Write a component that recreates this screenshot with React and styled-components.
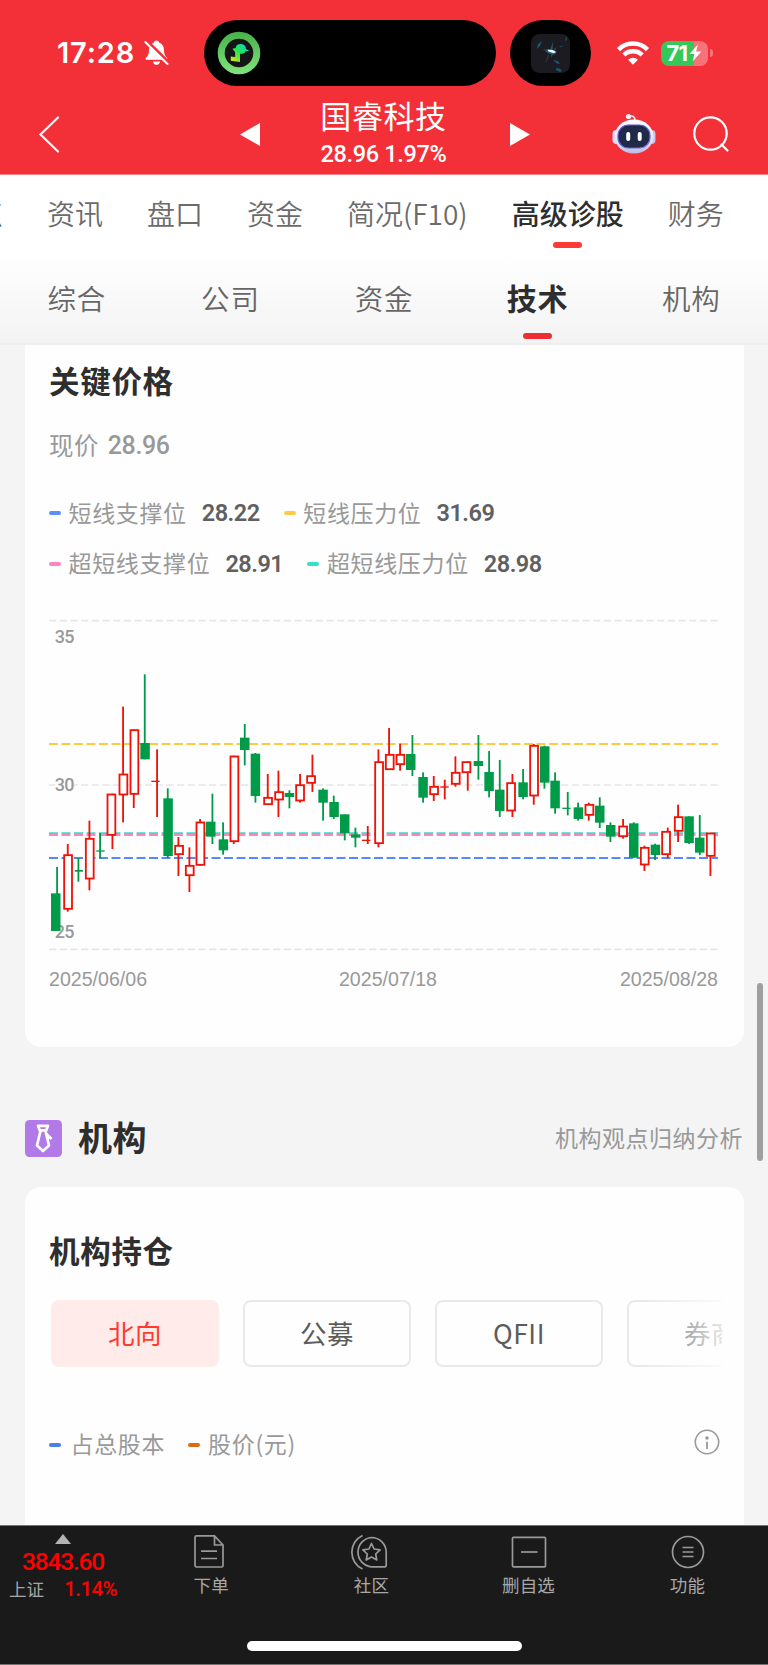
import React from 'react';
import styled, { createGlobalStyle } from 'styled-components';

const cjk = `"Noto Sans CJK SC", sans-serif`;
const din = `Roboto, "Noto Sans CJK SC", sans-serif`;

const GlobalStyle = createGlobalStyle`
  * { box-sizing: border-box; }
  body { margin: 0; background: #f4f4f4; font-family: ${cjk}; }
  svg { display: block; flex: none; }
`;

const Screen = styled.div`
  width: 768px;
  height: 1665px;
  position: relative;
  overflow: hidden;
  display: flex;
  flex-direction: column;
  background: #f4f4f4;
`;

/* ---------- header ---------- */
const Header = styled.header`
  height: 175px;
  flex: none;
  background: #f33038;
  border-bottom: 1px solid #f98388;
  color: #fff;
`;
const StatusBar = styled.div`
  height: 98px;
  padding: 8px 50px 0 57px;
  display: flex;
  align-items: center;
`;
const Clock = styled.div`
  width: 87px;
  flex: none;
  font: 600 29px/40px Inter, sans-serif;
  letter-spacing: 0.85px;
  white-space: nowrap;
`;
const Island = styled.div`
  width: ${p => p.$w}px;
  height: 66px;
  margin-left: ${p => p.$ml}px;
  flex: none;
  border-radius: 33px;
  background: #000;
  display: flex;
  align-items: center;
  padding-left: ${p => p.$pl}px;
`;
const WifiSlot = styled.div`margin-left: 25px;`;
const Battery = styled.div`
  width: 47px;
  height: 25px;
  margin-left: 11px;
  flex: none;
  border-radius: 8px;
  background: linear-gradient(90deg, #34c759 33px, #f87379 33px);
  display: flex;
  align-items: center;
  padding-left: 5.5px;
  font: 700 22px/25px Inter, sans-serif;
  letter-spacing: -0.8px;
`;
const BatteryCap = styled.div`
  width: 3px;
  height: 8px;
  margin-left: 2px;
  border-radius: 0 4px 4px 0;
  background: #f87379;
`;

const NavBar = styled.div`
  height: 76px;
  padding: 0 38px 4px 38px;
  display: flex;
  align-items: center;
  justify-content: space-between;
`;
const NavSide = styled.div`
  width: 122px;
  padding-left: ${p => p.$pl || 0}px;
  display: flex;
  align-items: center;
  justify-content: space-between;
`;
const StockSwitch = styled.div`
  width: 292px;
  padding-left: 2px;
  display: flex;
  align-items: center;
  justify-content: space-between;
`;
const StockTitle = styled.div`
  height: 76px;
  margin: 2px 3px 0 0;
  text-align: center;
  white-space: nowrap;
`;
const StockName = styled.div`
  font-size: 31px;
  line-height: 35px;
  letter-spacing: 0.6px;
`;
const StockQuote = styled.div`
  font: 500 23.5px/44px ${din};
  letter-spacing: -0.35px;
`;

/* ---------- tabs ---------- */
const MainTabs = styled.nav`
  height: 78px;
  flex: none;
  padding-left: 47px;
  display: flex;
  gap: 44px;
  background: #fff;
  overflow: hidden;
`;
const MainTab = styled.div`
  height: 78px;
  flex: none;
  display: flex;
  flex-direction: column;
  align-items: center;
  padding-top: 18px;
  font-size: 28px;
  line-height: 41px;
  white-space: nowrap;
  color: ${p => (p.$on ? '#2e2e2e' : '#6b6b6b')};
  font-weight: ${p => (p.$on ? 500 : 350)};
  &:first-child { margin-left: -100px; }
`;
const TabMark = styled.i`
  width: 29px;
  height: 6px;
  margin-top: ${p => p.$mt}px;
  border-radius: 3px;
  background: ${p => p.$c};
`;
const SubTabs = styled.nav`
  height: 92px;
  flex: none;
  display: grid;
  grid-template-columns: repeat(5, 1fr);
  background: linear-gradient(#fff, #f3f3f3);
  border-bottom: 2px solid #eee;
`;
const SubTab = styled.div`
  display: flex;
  flex-direction: column;
  align-items: center;
  padding-top: 24px;
  font-size: ${p => (p.$on ? 30 : 28.5)}px;
  font-weight: ${p => (p.$on ? 700 : 350)};
  line-height: 41px;
  letter-spacing: 0.8px;
  color: ${p => (p.$on ? '#2e2e2e' : '#666')};
`;

/* ---------- cards ---------- */
const Card = styled.section`
  width: 719px;
  height: ${p => p.$h}px;
  flex: none;
  margin-left: 25px;
  padding: ${p => p.$pt}px 25px 0 24px;
  background: #fefefe;
  border-radius: ${p => p.$radius};
  overflow: hidden;
`;
const CardTitle = styled.h2`
  margin: 0;
  font-size: 30.5px;
  line-height: 44px;
  font-weight: 700;
  letter-spacing: 0.7px;
  color: #2e2e2e;
`;
const PriceLine = styled.div`
  margin-top: 22px;
  display: flex;
  align-items: center;
  gap: 9px;
  height: 40px;
  font-size: 24.5px;
  letter-spacing: 0.4px;
  color: #999;
`;
const PriceValue = styled.span`
  margin-top: 4px;
  font: 500 25px/40px ${din};
  letter-spacing: -0.4px;
`;
const Legends = styled.div`
  margin-top: ${p => p.$mt}px;
  display: flex;
  flex-direction: column;
`;
const LegendRow = styled.div`
  height: 50.5px;
  display: flex;
  align-items: center;
  gap: 25px;
`;
const LegendItem = styled.div`
  display: flex;
  align-items: center;
  font-size: 23px;
  color: #999;
  white-space: nowrap;
`;
const LegendLabel = styled.span`
  margin-top: -3px;
  letter-spacing: 0.65px;
`;
const Dash = styled.i`
  width: 12px;
  height: 4px;
  margin-right: ${p => p.$gap || 7}px;
  border-radius: 2px;
  background: ${p => p.$c};
`;
const LegendValue = styled.b`
  width: 57px;
  margin-left: 15px;
  font: 600 23.5px/34px ${din};
  letter-spacing: -0.5px;
  color: #606060;
`;
const ChartSvg = styled.svg`
  margin-top: 21px;
`;
const Dates = styled.div`
  width: 669px;
  margin-top: 12px;
  display: flex;
  justify-content: space-between;
  font: 19.6px/24px "Liberation Sans", sans-serif;
  color: #999;
  span:nth-child(2) { margin-left: 9px; }
`;

const SectionHead = styled.div`
  height: 140px;
  flex: none;
  padding: 40px 25px 0 24.5px;
  display: flex;
  align-items: center;
  svg { margin-top: 2px; }
`;
const SectionTitle = styled.h1`
  margin: 0 auto 0 16.5px;
  font-size: 34px;
  line-height: 50px;
  font-weight: 700;
  letter-spacing: 0.6px;
  color: #2e2e2e;
`;
const SectionNote = styled.span`
  margin-top: -1px;
  font-size: 23px;
  letter-spacing: 0.5px;
  color: #999;
`;
const Pills = styled.div`
  width: 673px;
  margin-top: 28px;
  padding-left: 2px;
  display: flex;
  gap: 24px;
  overflow: hidden;
  position: relative;
  &::after {
    content: '';
    position: absolute;
    inset: 0 0 0 auto;
    width: 80px;
    background: linear-gradient(90deg, rgba(254, 254, 254, 0), rgba(254, 254, 254, 0.85));
  }
`;
const Pill = styled.div`
  width: 168px;
  height: 67px;
  flex: none;
  display: flex;
  align-items: center;
  justify-content: center;
  border-radius: 8px;
  border: 2px solid ${p => (p.$on ? '#ffebea' : '#e9e9e9')};
  background: ${p => (p.$on ? '#ffebea' : '#fefefe')};
  color: ${p => (p.$on ? '#ff3b30' : '#5c5c5c')};
  font-size: 26.5px;
  letter-spacing: 0.5px;
  padding-bottom: 2px;
`;
const HoldingLegend = styled.div`
  margin-top: 62px;
  display: flex;
  align-items: center;
  gap: 23px;
`;
const InfoSlot = styled.div`
  margin: -6px -1px 0 auto;
`;

const ScrollThumb = styled.div`
  position: absolute;
  left: 757px;
  top: 983px;
  width: 6px;
  height: 178px;
  border-radius: 3px;
  background: #9f9f9f;
`;

/* ---------- bottom bar ---------- */
const BottomBar = styled.footer`
  height: 140px;
  flex: none;
  background: #1a1a1a;
  border-top: 1px solid #737373;
  border-bottom: 1px solid #737373;
  display: flex;
  flex-direction: column;
  align-items: center;
  justify-content: space-between;
`;
const BottomItems = styled.div`
  width: 768px;
  display: flex;
`;
const IndexBox = styled.div`
  width: 131px;
  padding-top: 8px;
  display: flex;
  flex-direction: column;
  align-items: center;
  padding-right: 5px;
`;
const IndexValue = styled.div`
  font: 500 24.5px/35px ${din};
  letter-spacing: -1.2px;
  color: #f00;
`;
const IndexChange = styled.div`
  width: 108px;
  display: flex;
  justify-content: space-between;
  align-items: center;
  font-size: 17.5px;
  line-height: 20px;
  color: #a6a6a6;
`;
const Percent = styled.span`
  font: 500 20.5px/20px ${din};
  letter-spacing: -0.6px;
  color: #f00;
`;
const Action = styled.div`
  width: 159px;
  padding-top: 8px;
  padding-left: ${p => p.$pl || 0}px;
  display: flex;
  flex-direction: column;
  align-items: center;
  font-size: 17.5px;
  line-height: 26px;
  letter-spacing: 0.2px;
  color: #a8a8a8;
  svg { margin-right: ${p => p.$shift || 0}px; margin-bottom: 2px; }
`;
const HomeIndicator = styled.div`
  width: 275px;
  height: 10px;
  margin-bottom: 13px;
  border-radius: 5px;
  background: #fff;
`;

/* ---------- candlestick chart ---------- */
// [color, body left, body top, body bottom, wick x, wick top, wick bottom], three units per pixel
const candles = [
  ['g', 6, 850, 963, 24, 771, 963], ['r', 43, 733, 899, 56, 702, 905],
  ['g', 77, 780, 785, 88, 744, 815], ['r', 108, 684, 808, 121, 632, 841],
  ['g', 142, 721, 725, 153, 669, 745], ['r', 173, 551, 677, 190, 551, 717],
  ['r', 209, 491, 556, 222, 290, 637], ['r', 242, 358, 554, 254, 358, 594],
  ['g', 274, 399, 448, 287, 193, 448], ['r', 307, 512, 516, 324, 418, 621],
  ['g', 343, 565, 738, 356, 535, 744], ['r', 376, 705, 735, 388, 681, 798],
  ['r', 408, 765, 798, 421, 712, 846], ['r', 440, 635, 767, 453, 627, 767],
  ['g', 471, 635, 680, 490, 551, 702], ['g', 509, 688, 721, 522, 637, 734],
  ['r', 542, 437, 696, 554, 437, 702], ['g', 573, 383, 420, 587, 342, 466],
  ['g', 605, 431, 558, 619, 429, 578], ['r', 643, 561, 585, 656, 492, 585],
  ['r', 676, 544, 571, 688, 482, 621], ['g', 707, 549, 561, 721, 541, 595],
  ['r', 739, 523, 574, 753, 492, 578], ['r', 772, 496, 521, 790, 434, 546],
  ['g', 808, 539, 578, 822, 535, 632], ['g', 841, 576, 621, 854, 557, 627],
  ['g', 873, 613, 670, 887, 613, 691], ['g', 906, 673, 683, 919, 653, 712],
  ['r', 939, 689, 693, 956, 648, 702], ['r', 976, 454, 702, 988, 418, 712],
  ['r', 1008, 432, 480, 1020, 354, 480], ['r', 1040, 432, 465, 1053, 401, 482],
  ['g', 1071, 432, 480, 1090, 375, 498], ['g', 1108, 501, 563, 1122, 487, 578],
  ['r', 1141, 528, 555, 1154, 498, 573], ['r', 1174, 529, 533, 1187, 509, 568],
  ['r', 1206, 486, 524, 1219, 439, 530], ['r', 1238, 454, 489, 1256, 454, 542],
  ['g', 1274, 453, 468, 1288, 375, 509], ['g', 1306, 486, 543, 1320, 423, 562],
  ['g', 1338, 539, 603, 1352, 450, 621], ['r', 1372, 517, 604, 1390, 492, 621],
  ['g', 1408, 517, 561, 1422, 477, 568], ['r', 1441, 405, 559, 1454, 402, 584],
  ['g', 1473, 409, 518, 1486, 407, 536], ['g', 1504, 512, 595, 1518, 487, 611],
  ['g', 1540, 593, 597, 1556, 546, 616], ['g', 1574, 592, 627, 1587, 578, 632],
  ['r', 1607, 582, 617, 1619, 578, 632], ['g', 1638, 587, 638, 1652, 562, 654],
  ['g', 1671, 645, 680, 1684, 637, 696], ['r', 1708, 647, 681, 1722, 627, 686],
  ['g', 1740, 640, 743, 1754, 637, 743], ['r', 1773, 711, 766, 1786, 707, 783],
  ['g', 1805, 704, 735, 1818, 701, 750], ['r', 1837, 663, 735, 1856, 653, 745],
  ['r', 1875, 619, 665, 1887, 584, 696], ['g', 1906, 619, 699, 1920, 619, 702],
  ['g', 1938, 683, 728, 1952, 615, 735], ['r', 1971, 668, 740, 1984, 668, 798],
];
const levels = [
  { y: 402, c: '#ffc940' },
  { y: 675, c: '#f589c5' },
  { y: 669.5, c: '#3fd9c8' },
  { y: 744, c: '#5588ff' },
];

function Candle({ d }) {
  const [kind, x, top, bottom, wx, wt, wb] = d;
  const up = kind === 'r';
  const color = up ? '#ef1208' : '#009b48';
  const thin = bottom - top < 8;
  return (
    <g>
      <rect x={wx - 2.5} y={wt} width="5.5" height={wb - wt} fill={color} />
      {up && !thin ? (
        <rect x={x + 2.5} y={top + 2.5} width="23.5" height={bottom - top - 5} fill="#fefefe" stroke={color} strokeWidth="5.5" />
      ) : (
        <rect x={x} y={top} width={thin ? 25 : 28.5} height={bottom - top} fill={color} />
      )}
    </g>
  );
}

function KeyPriceChart() {
  return (
    <ChartSvg width="670" height="345" viewBox="0 0 2010 1035">
      {[32, 525, 1018].map(y => (
        <line key={y} x1="0" x2="2007" y1={y} y2={y} stroke="#e6e6e6" strokeWidth="5" strokeDasharray="22 10" />
      ))}
      <rect x="18" y="500" width="57" height="50" fill="#fefefe" />
      <g fill="#999" fontFamily="Roboto, sans-serif" fontSize="54" fontWeight="500" letterSpacing="-2">
        <text x="17" y="98">35</text>
        <text x="17" y="542">30</text>
        <text x="17" y="985">25</text>
      </g>
      {levels.map(l => (
        <line key={l.y} x1="0" x2="2007" y1={l.y} y2={l.y} stroke={l.c} strokeWidth="5.5" strokeDasharray="27 10.5" />
      ))}
      {candles.map((d, i) => <Candle key={i} d={d} />)}
    </ChartSvg>
  );
}

/* ---------- icons ---------- */
const BellOff = () => (
  <svg width="26" height="28" viewBox="0 0 26 28">
    <path d="M12.5 1.5c1.6 0 2.6 1 2.8 2.2 3.200 1 4.600 3.800 4.700 7.300 0 4.300 1.300 6 3 7.700.8.9.4 2.100-.8 2.100H2.800c-1.200 0-1.600-1.200-.8-2.100 1.700-1.700 3-3.400 3-7.700.1-3.500 1.500-6.300 4.700-7.300.2-1.200 1.200-2.200 2.800-2.200z" fill="#fff" />
    <path d="M9 22.600h7c-.3 2.200-1.700 3.400-3.500 3.400S9.300 24.800 9 22.600z" fill="#fff" />
    <path d="M2.600 1.500 26 24.500" stroke="#f33038" strokeWidth="3" />
    <path d="M1.300 3 23.500 25" stroke="#fff" strokeWidth="2" strokeLinecap="round" />
  </svg>
);
const GreenRing = () => (
  <svg width="44" height="44" viewBox="0 0 44 44">
    <defs>
      <linearGradient id="ring" x1="0" y1="0" x2="0" y2="1"><stop offset="0" stopColor="#48b04a" /><stop offset="1" stopColor="#80e57c" /></linearGradient>
      <linearGradient id="mark" x1="1" y1="0" x2="0" y2="1"><stop offset="0.1" stopColor="#10d5c0" /><stop offset="0.5" stopColor="#25e554" /><stop offset="1" stopColor="#fbe30b" /></linearGradient>
    </defs>
    <circle cx="22" cy="22" r="21.300" fill="url(#ring)" />
    <circle cx="22" cy="22" r="14.300" fill="#151515" />
    <path d="M18.700 17c.2-2.500 2.100-4 4.900-4 3.200 0 5.200 1.800 5.400 5l3.200 1.800-3.700.6c-.5 1.500-2.500 2.400-5.500 2.300v8.400l-9.200-1.400v-4.200l4.400.6V21.200l-2.800-3.400z" fill="url(#mark)" />
  </svg>
);
const NowPlaying = () => (
  <svg width="39" height="39" viewBox="0 0 39 39">
    <rect width="39" height="39" rx="8.500" fill="#1b1b21" />
    <g fill="#17647f" opacity="0.85">
      <path d="M7 10l4-3-2 5-3 3zM25 34l3 1-1-2 4 4-2 1-4-2zM28 12.500l5-1-4 2zM.5 20l1 4zM35 2l1 3-2 3z" />
      <path d="M22 26l5 1 2 3-3-.5z" />
    </g>
    <path d="M12 15.500c3 0 5 .3 7 1l3-9-.5 9.500 4-4-2.500 5.500 3 1.500-4 .5-2 3 .3-3.500c-3 0-5-1.500-6-3.500z" fill="#25596a" />
    <path d="M17.500 21l-2.500 7" stroke="#3a454d" strokeWidth="0.800" />
    <path d="M16.500 15.500l5 .5 4 2-3 1.200-5-1.700z" fill="#e4faff" />
  </svg>
);
const Wifi = () => (
  <svg width="34" height="26" viewBox="0 0 34 26" fill="none" stroke="#fff" strokeWidth="4.500">
    <path d="M2.500 9.600a20.500 20.500 0 0 1 29 0" />
    <path d="M7.800 15a13 13 0 0 1 18.400 0" />
    <path d="M17 24.700l-4.900-5a7 7 0 0 1 9.800 0z" fill="#fff" stroke="none" />
  </svg>
);
const BoltSvg = styled.svg`margin-left: 1.5px;`;
const Bolt = () => (
  <BoltSvg width="13" height="18" viewBox="0 0 13 18">
    <path d="M8.800.5.500 10h4.900L3.700 17.500 12.300 7.500H7.200z" fill="#fff" />
  </BoltSvg>
);
const Back = () => (
  <svg width="22" height="38" viewBox="0 0 22 38"><path d="M20 2.500 2.500 19.500 20 36.500" fill="none" stroke="#fff" strokeWidth="2.200" strokeLinecap="round" /></svg>
);
const Tri = ({ flip }) => (
  <svg width="20" height="23" viewBox="0 0 20 23"><path d={flip ? 'M20 11.500 0 0v23z' : 'M0 11.500 20 0v23z'} fill="#fff" /></svg>
);
const Robot = () => (
  <svg width="44" height="42" viewBox="0 0 44 42">
    <defs>
      <linearGradient id="head" x1="0" y1="0" x2="0" y2="1"><stop offset="0" stopColor="#fff" /><stop offset="0.65" stopColor="#e3e1f7" /><stop offset="1" stopColor="#bfb9e6" /></linearGradient>
      <linearGradient id="rim" x1="0" y1="0" x2="1" y2="1"><stop offset="0" stopColor="#7c4ce0" /><stop offset="0.6" stopColor="#4168c8" /><stop offset="1" stopColor="#a56be8" /></linearGradient>
    </defs>
    <path d="M17 3.500c4-1.300 6 .5 6 4" fill="none" stroke="#eeecfa" strokeWidth="1.600" />
    <circle cx="16.500" cy="3.500" r="2.600" fill="#f2f1fb" />
    <rect x="0.500" y="17" width="8" height="14" rx="4" fill="#dcdaf3" />
    <rect x="35.500" y="17" width="8" height="14" rx="4" fill="#c9c5ec" />
    <ellipse cx="22" cy="23.500" rx="19.500" ry="17" fill="url(#head)" />
    <rect x="6" y="12" width="32" height="23" rx="10.500" fill="#202948" stroke="url(#rim)" strokeWidth="1.200" />
    <rect x="14.200" y="19" width="4" height="9" rx="2" fill="#fff" />
    <rect x="25.700" y="19" width="4" height="9" rx="2" fill="#fff" />
  </svg>
);
const Search = () => (
  <svg width="38" height="38" viewBox="0 0 38 38" fill="none" stroke="#fff" strokeWidth="2.200" strokeLinecap="round">
    <circle cx="18.500" cy="18.500" r="16.200" /><path d="M29.500 29.500 35.500 35.500" />
  </svg>
);
const Tie = () => (
  <svg width="37" height="37" viewBox="0 0 37 37">
    <rect width="37" height="37" rx="4.500" fill="#b17ae8" />
    <g fill="none" stroke="#fff" strokeWidth="2.700" strokeLinejoin="round">
      <path d="M13 5.800h10l-1.700 4.500h-6.600zM15.600 10.500l-3.600 15 6 5.500 6-5.500-3.600-15zM20.500 13l6 6" />
    </g>
  </svg>
);
const Info = () => (
  <svg width="26" height="26" viewBox="0 0 26 26">
    <circle cx="13" cy="13" r="11.700" fill="none" stroke="#999" strokeWidth="1.600" />
    <circle cx="13" cy="9" r="1.800" fill="#999" /><path d="M13 12.800V20" stroke="#999" strokeWidth="1.800" />
  </svg>
);
const lineIcon = { width: 38, height: 36, viewBox: '0 0 38 36', fill: 'none', stroke: '#999', strokeWidth: 1.7 };
const DocIcon = () => (
  <svg {...lineIcon}><path d="M24.500 1.800H6.500Q5 1.800 5 3.300V31.500Q5 33 6.500 33H31.500Q33 33 33 31.500V11zM24.500 1.800V11H33M11 17.200H27M11 24.500H27" /></svg>
);
const CommunityIcon = () => (
  <svg {...lineIcon}>
    <path d="M12.500 1.500A18.500 18.500 0 0 0 12.500 35M21.500 3.500A14.700 14.700 0 0 0 21.500 32.800H34.500Q36.200 32.800 36.200 31V18.200A14.700 14.700 0 0 0 21.500 3.500z" />
    <path d="M21.500 9.500l2.600 5.500 6 .8-4.400 4.200 1.100 6-5.300-2.900-5.300 2.900 1.100-6-4.400-4.200 6-.8z" strokeLinejoin="round" />
  </svg>
);
const RemoveIcon = () => (
  <svg {...lineIcon}><rect x="2.500" y="3.300" width="33" height="29.500" rx="1" /><path d="M11 18H27.500" /></svg>
);
const MenuIcon = () => (
  <svg {...lineIcon}><circle cx="19" cy="18" r="15.500" /><path d="M13.500 13.500H24.500M13.500 18H24.500M13.500 22.500H24.500" /></svg>
);

const mainTabs = ['看点', '资讯', '盘口', '资金', '简况(F10)', '高级诊股', '财务'];
const subTabs = ['综合', '公司', '资金', '技术', '机构'];
const legendRows = [
  [['#5b8ff9', '短线支撑位', '28.22'], ['#ffcb47', '短线压力位', '31.69']],
  [['#f986c3', '超短线支撑位', '28.91'], ['#35dfc9', '超短线压力位', '28.98']],
];

export default function App() {
  return (
    <>
      <GlobalStyle />
      <Screen>
        <Header>
          <StatusBar>
            <Clock>17:28</Clock>
            <BellOff />
            <Island $w={292} $ml={34} $pl={12.5}><GreenRing /></Island>
            <Island $w={81} $ml={14} $pl={21}><NowPlaying /></Island>
            <WifiSlot><Wifi /></WifiSlot>
            <Battery>71<Bolt /></Battery>
            <BatteryCap />
          </StatusBar>
          <NavBar>
            <NavSide><Back /></NavSide>
            <StockSwitch>
              <Tri />
              <StockTitle>
                <StockName>国睿科技</StockName>
                <StockQuote>28.96 1.97%</StockQuote>
              </StockTitle>
              <Tri flip />
            </StockSwitch>
            <NavSide $pl={4}><Robot /><Search /></NavSide>
          </NavBar>
        </Header>

        <MainTabs>
          {mainTabs.map(t => (
            <MainTab key={t} $on={t === '高级诊股'}>
              {t}
              {t === '高级诊股' && <TabMark $c="#ff3b35" $mt={8} />}
            </MainTab>
          ))}
        </MainTabs>
        <SubTabs>
          {subTabs.map(t => (
            <SubTab key={t} $on={t === '技术'}>
              {t}
              {t === '技术' && <TabMark $c="#ed2f31" $mt={15} />}
            </SubTab>
          ))}
        </SubTabs>

        <Card $h={702} $pt={13} $radius="0 0 16px 16px">
          <CardTitle>关键价格</CardTitle>
          <PriceLine>现价<PriceValue>28.96</PriceValue></PriceLine>
          <Legends $mt={24}>
            {legendRows.map((row, i) => (
              <LegendRow key={i}>
                {row.map(([c, label, value]) => (
                  <LegendItem key={label}>
                    <Dash $c={c} $gap={7.5} />
                    <LegendLabel>{label}</LegendLabel>
                    <LegendValue>{value}</LegendValue>
                  </LegendItem>
                ))}
              </LegendRow>
            ))}
          </Legends>
          <KeyPriceChart />
          <Dates><span>2025/06/06</span><span>2025/07/18</span><span>2025/08/28</span></Dates>
        </Card>

        <SectionHead>
          <Tie />
          <SectionTitle>机构</SectionTitle>
          <SectionNote>机构观点归纳分析</SectionNote>
        </SectionHead>

        <Card $h={338} $pt={41} $radius="16px 16px 0 0">
          <CardTitle>机构持仓</CardTitle>
          <Pills>
            <Pill $on>北向</Pill>
            <Pill>公募</Pill>
            <Pill>QFII</Pill>
            <Pill>券商</Pill>
          </Pills>
          <HoldingLegend>
            <LegendItem><Dash $c="#4a7ee8" $gap={9.5} /><LegendLabel>占总股本</LegendLabel></LegendItem>
            <LegendItem><Dash $c="#de6b10" $gap={8} /><LegendLabel>股价(元)</LegendLabel></LegendItem>
            <InfoSlot><Info /></InfoSlot>
          </HoldingLegend>
        </Card>

        <BottomBar>
          <BottomItems>
            <IndexBox>
              <svg width="16" height="10" viewBox="0 0 16 10"><path d="M8 0l8 10H0z" fill="#b3b3b3" /></svg>
              <IndexValue>3843.60</IndexValue>
              <IndexChange>上证<Percent>1.14%</Percent></IndexChange>
            </IndexBox>
            <Action $shift={4} $pl={1.5}><DocIcon />下单</Action>
            <Action $shift={5} $pl={4}><CommunityIcon />社区</Action>
            <Action><RemoveIcon />删自选</Action>
            <Action><MenuIcon />功能</Action>
          </BottomItems>
          <HomeIndicator />
        </BottomBar>
        <ScrollThumb />
      </Screen>
    </>
  );
}
